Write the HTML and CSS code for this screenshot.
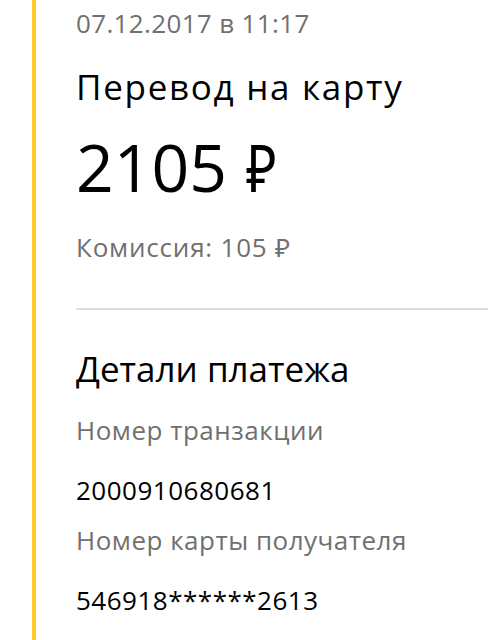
FILE: index.html
```html
<!DOCTYPE html>
<html lang="ru">
<head>
<meta charset="utf-8">
<link rel="stylesheet" href="styles.css">
</head>
<body>
<div class="page">
  <div class="rail">
    <div class="content">
      <div class="date">07.12.2017 в 11:17</div>
      <div class="title">Перевод на карту</div>
      <div class="amount">2105 <span class="rub">₽</span></div>
      <div class="fee">Комиссия: 105 ₽</div>
      <div class="divider"></div>
      <div class="section-title">Детали платежа</div>
      <div class="row">
        <div class="label">Номер транзакции</div>
        <div class="value">2000910680681</div>
      </div>
      <div class="row">
        <div class="label">Номер карты получателя</div>
        <div class="value">546918******2613</div>
      </div>
      <div class="row row-last">
        <div class="label">Платёжная система получателя</div>
        <div class="value">MasterCard</div>
      </div>
    </div>
  </div>
</div>
</body>
</html>
```

FILE: styles.css
```css
html, body {
  margin: 0;
  padding: 0;
  background: #ffffff;
}
body {
  font-family: "Open Sans", "Noto Sans", sans-serif;
  color: #000;
  overflow: hidden;
  height: 640px;
}
.page {
  padding-left: 32px;
  height: 640px;
}
.rail {
  border-left: 4px solid #ffc933;
  height: 100%;
}
.content {
  padding-left: 40px;
  padding-top: 5px;
  display: flex;
  flex-direction: column;
}
.date {
  font-size: 26px;
  line-height: 36px;
  color: #707070;
  letter-spacing: 0.35px;
}
.title {
  font-size: 35px;
  line-height: 44px;
  margin-top: 24px;
  letter-spacing: 1.7px;
}
.amount {
  font-size: 66px;
  line-height: 80px;
  margin-top: 17px;
  word-spacing: 2px;
}
.rub {
  display: inline-block;
  line-height: 0;
  transform: scaleX(0.8);
  transform-origin: left center;
}
.fee {
  font-size: 26px;
  line-height: 36px;
  color: #707070;
  margin-top: 23px;
  letter-spacing: 0.8px;
}
.divider {
  height: 2px;
  background: #e0dcdf;
  margin-top: 43px;
}
.section-title {
  font-size: 35px;
  line-height: 44px;
  margin-top: 37px;
}
.row {
  display: flex;
  flex-direction: column;
}
.label {
  font-size: 26px;
  line-height: 36px;
  color: #707070;
  margin-top: 21px;
  letter-spacing: 0.5px;
}
.row + .row .label {
  margin-top: 14px;
}
.row-last .label {
  margin-top: 18px;
}
.value {
  font-size: 26px;
  line-height: 36px;
  margin-top: 24px;
  letter-spacing: 0.5px;
}
```
